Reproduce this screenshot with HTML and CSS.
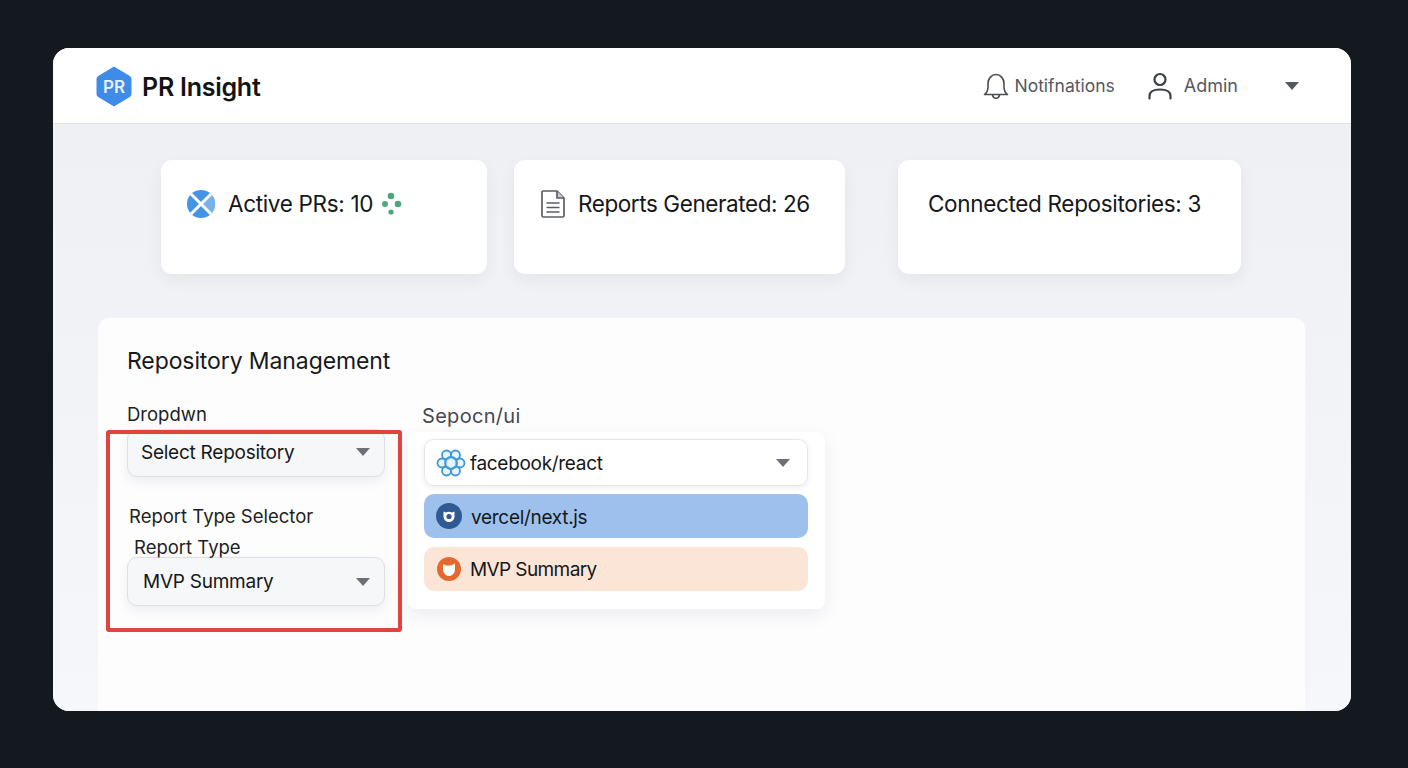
FILE: index.html
```html
<!DOCTYPE html>
<html>
<head>
<meta charset="utf-8">
<title>PR Insight</title>
<link rel="stylesheet" href="styles.css">
</head>
<body>
<div class="frame">
	<div class="header">
		<div class="brand">
			<svg class="logo" width="36" height="41" viewBox="0 0 36 41">
				<path d="M18 .5 33.8 10Q35.500 11 35.500 13V28Q35.500 30 33.800 31L18 40.500 2.200 31Q.5 30 .5 28V13Q.5 11 2.200 10Z" fill="#3f8be8"/>
				<text x="18" y="26.500" text-anchor="middle" class="logo-text">PR</text>
			</svg>
			<span class="brand-name">PR Insight</span>
		</div>
		<div class="nav">
			<svg class="nav-bell" width="28" height="28" viewBox="0 0 28 28" fill="none" stroke="#4a4d52" stroke-width="1.6" stroke-linejoin="round" stroke-linecap="round">
				<path d="M2.500 22.500C5 20.500 6 18.500 6 15V11.500C6 6.500 9.500 2.500 14 2.500S22 6.500 22 11.500V15C22 18.500 23 20.500 25.500 22.500Z"/>
				<path d="M10.500 22.800C10.800 25 12.200 26.200 14 26.200S17.200 25 17.500 22.800"/>
			</svg>
			<span class="nav-notif">Notifnations</span>
			<svg class="nav-user" width="26" height="28" viewBox="0 0 26 28" fill="none" stroke="#3d4045" stroke-width="2.200" stroke-linecap="round">
				<circle cx="13" cy="7.500" r="5.500"/>
				<path d="M2.500 26.500V24C2.500 20 6 17.500 13 17.500S23.500 20 23.500 24V26.500"/>
			</svg>
			<span class="nav-admin">Admin</span>
			<span class="caret caret-nav"></span>
		</div>
	</div>
	<div class="main">
		<div class="stats">
			<div class="stat stat-prs">
				<svg width="30" height="30" viewBox="0 0 30 30">
					<circle cx="15" cy="15" r="14" fill="#4494e6"/>
					<path d="M15 15 25 5A14 14 0 0 1 25 25Z" fill="#78b0e8"/>
					<path d="M5 5 25 25M25 5 5 25" stroke="#fff" stroke-width="3"/>
				</svg>
				<span>Active PRs: 10</span>
				<svg class="stat-dots" width="22" height="28" viewBox="0 0 22 28" fill="#4ea67c">
					<circle cx="11" cy="7" r="3.300"/>
					<circle cx="5" cy="15" r="3"/>
					<circle cx="18" cy="15" r="3.300"/>
					<circle cx="11" cy="23" r="2.600"/>
				</svg>
			</div>
			<div class="stat stat-reports">
				<svg width="26" height="30" viewBox="0 0 26 30" fill="none" stroke="#5a5d63" stroke-width="1.700" stroke-linejoin="round">
					<path d="M3 2H17L24 9V26.500Q24 28 22.500 28H3.500Q2 28 2 26.500V3Q2 2 3 2Z"/>
					<path d="M17 2V9H24" fill="#c9ccd1"/>
					<path d="M6.500 14H19.500M6.500 18.500H19.500M6.500 23H19.500"/>
				</svg>
				<span>Reports Generated: 26</span>
			</div>
			<div class="stat stat-repos">
				<span>Connected Repositories: 3</span>
			</div>
		</div>
		<div class="panel">
			<h2 class="panel-title">Repository Management</h2>
			<div class="columns">
				<div class="col-left">
					<div class="label label-drop">Dropdwn</div>
					<div class="select select-repo">
						<span>Select Repository</span>
						<span class="caret"></span>
					</div>
					<div class="label label-selector">Report Type Selector</div>
					<div class="label label-type">Report Type</div>
					<div class="select select-type">
						<span>MVP Summary</span>
						<span class="caret"></span>
					</div>
				</div>
				<div class="col-right">
					<div class="label label-shad">Sepocn/ui</div>
					<div class="menu">
						<div class="menu-row menu-top">
							<svg width="30" height="30" viewBox="0 0 30 30" fill="#d6eefa" fill-opacity=".6" stroke="#3f97d6" stroke-width="1.800">
								<circle cx="10.500" cy="7" r="4.500"/>
								<circle cx="19.500" cy="7" r="4.500"/>
								<circle cx="6" cy="15" r="4.500"/>
								<circle cx="24" cy="15" r="4.500"/>
								<circle cx="10.500" cy="23" r="4.500"/>
								<circle cx="19.500" cy="23" r="4.500"/>
								<circle cx="15" cy="15" r="6"/>
							</svg>
							<span class="menu-text">facebook/react</span>
							<span class="caret"></span>
						</div>
						<div class="menu-row menu-blue">
							<svg width="26" height="26" viewBox="0 0 26 26">
								<circle cx="13" cy="13" r="13" fill="#2f5a92"/>
								<path d="M7.500 8.500 10 9.500Q13 8 16 9.500L18.500 8.500 18.500 14C18 17.500 15.500 19 13 19S8 17.500 7.500 14Z" fill="#fff"/>
								<circle cx="13" cy="13.500" r="2.600" fill="#2f5a92"/>
							</svg>
							<span class="menu-text">vercel/next.js</span>
						</div>
						<div class="menu-row menu-orange">
							<svg width="24" height="24" viewBox="0 0 24 24">
								<circle cx="12" cy="12" r="12" fill="#e5692f"/>
								<path d="M6 7 9 8.500H14L18 6.500 18 13C17.500 16.500 15 19 12 19S6.500 16.500 6 13Z" fill="#fff"/>
							</svg>
							<span class="menu-text">MVP Summary</span>
						</div>
					</div>
				</div>
			</div>
			<div class="highlight"></div>
		</div>
	</div>
</div>
</body>
</html>
```

FILE: styles.css
```css
* { margin: 0; padding: 0; box-sizing: border-box; }

body{
	background: #14181f;
	padding: 48px 57px 57px 53px;
	font-family: Inter, "Liberation Sans", sans-serif;
	color: #15171a;
	overflow: hidden;
}

.frame{
	height: 663px;
	border-radius: 16px;
	overflow: hidden;
	background: #eef0f4;
	display: flex;
	flex-direction: column;
}

.header{
	height: 76px;
	flex: none;
	background: #fff;
	border-bottom: 1px solid #e2e4e9;
	display: flex;
	align-items: center;
	justify-content: space-between;
	padding: 0 52px 0 43px;
}
.brand{
	display: flex;
	align-items: center;
	gap: 10px;
	margin-top: 2px;
}
.logo-text{
	font-family: Inter, "Liberation Sans", sans-serif;
	font-size: 17px;
	font-weight: 600;
	fill: #e8f1fd;
}
.brand-name{
	font-size: 25px;
	font-weight: 600;
	letter-spacing: -0.25px;
	color: #111316;
}
.nav{
	display: flex;
	align-items: center;
	font-size: 17.5px;
	color: #55585e;
}
.nav-notif{ margin-left: 4px; }
.nav-user{ margin-left: 32px; }
.nav-admin{
	margin-left: 11px;
	font-size: 18px;
}

.caret{
	width: 0;
	height: 0;
	border-left: 7px solid transparent;
	border-right: 7px solid transparent;
	border-top: 8px solid #6d7076;
	flex: none;
}
.caret-nav{
	margin-left: 47px;
	border-top-color: #55585e;
}

.main{
	flex: 1;
	padding: 36px 46px 0 45px;
	background: linear-gradient(#eef0f4, #f6f7fa);
}

.stats{
	display: flex;
	padding-left: 63px;
}
.stat{
	height: 114px;
	background: #fff;
	border-radius: 11px;
	box-shadow: 0 6px 16px rgba(30, 40, 60, 0.06);
	display: flex;
	align-items: flex-start;
	padding-top: 29px;
	font-size: 22.5px;
	line-height: 30px;
	letter-spacing: -0.33px;
}
.stat-prs{
	width: 326px;
	padding-left: 25px;
	gap: 12px;
}
.stat-dots{ margin-left: -5px; }
.stat-reports{
	width: 331px;
	margin-left: 27px;
	padding-left: 26px;
	gap: 12px;
	letter-spacing: -0.42px;
}
.stat-repos{
	width: 343px;
	margin-left: 53px;
	padding-left: 30px;
}

.panel{
	position: relative;
	height: 400px;
	margin-top: 44px;
	padding: 28px 29px 0;
	background: #fdfdfe;
	border-radius: 11px 11px 0 0;
}
.panel-title{
	font-size: 23px;
	font-weight: 400;
	line-height: 30px;
	letter-spacing: -0.1px;
	color: #17191c;
}

.columns{
	display: flex;
	gap: 23px;
	margin-top: 24px;
}
.col-left{
	width: 258px;
	padding-top: 2px;
}
.col-right{ width: 417px; }

.label{
	font-size: 18.5px;
	line-height: 24px;
	color: #1d1f23;
}
.label-selector{
	margin-top: 27px;
	padding-left: 2px;
}
.label-type{
	margin-top: 7px;
	padding-left: 7px;
}
.label-shad{
	font-size: 20px;
	letter-spacing: 0.3px;
	padding-left: 14px;
	margin-top: 4px;
	color: #45484e;
}

.select{
	display: flex;
	align-items: center;
	justify-content: space-between;
	background: #f6f7f9;
	border: 1px solid #dcdfe5;
	border-radius: 10px;
	box-shadow: 0 5px 12px rgba(30, 40, 60, 0.07);
	font-size: 19px;
	letter-spacing: -0.25px;
	padding-right: 14px;
}
.select-repo{
	height: 48px;
	margin-top: 3px;
	padding-left: 13px;
	padding-bottom: 2px;
}
.select-type{
	height: 49px;
	margin-top: -2px;
	padding-left: 15px;
}

.menu{
	height: 177px;
	margin-top: 4px;
	padding: 7px 17px 0 16px;
	background: #fff;
	border-radius: 8px;
	box-shadow: 0 6px 18px rgba(30, 40, 60, 0.08);
}
.menu-row{
	display: flex;
	align-items: center;
	height: 44px;
	border-radius: 10px;
	font-size: 19px;
	letter-spacing: -0.3px;
	margin-bottom: 9px;
}
.menu-top{
	height: 47px;
	margin-bottom: 8px;
	padding: 0 17px 0 11px;
	border: 1px solid #e4e6ea;
	box-shadow: 0 2px 6px rgba(30, 40, 60, 0.08);
}
.menu-top .menu-text{
	flex: 1;
	margin-left: 4px;
	padding-top: 2px;
}
.menu-blue{
	background: #9dc1ec;
	padding-left: 12px;
}
.menu-blue .menu-text{
	margin-left: 9px;
	padding-top: 2px;
}
.menu-orange{
	background: #fbe5d7;
	padding-left: 13px;
	letter-spacing: -0.6px;
}
.menu-orange .menu-text{ margin-left: 9px; }

/* red annotation box drawn over the form */
.highlight{
	position: absolute;
	left: 8px;
	top: 112px;
	width: 296px;
	height: 202px;
	border: 4px solid #e0443c;
	border-radius: 3px;
}
```
